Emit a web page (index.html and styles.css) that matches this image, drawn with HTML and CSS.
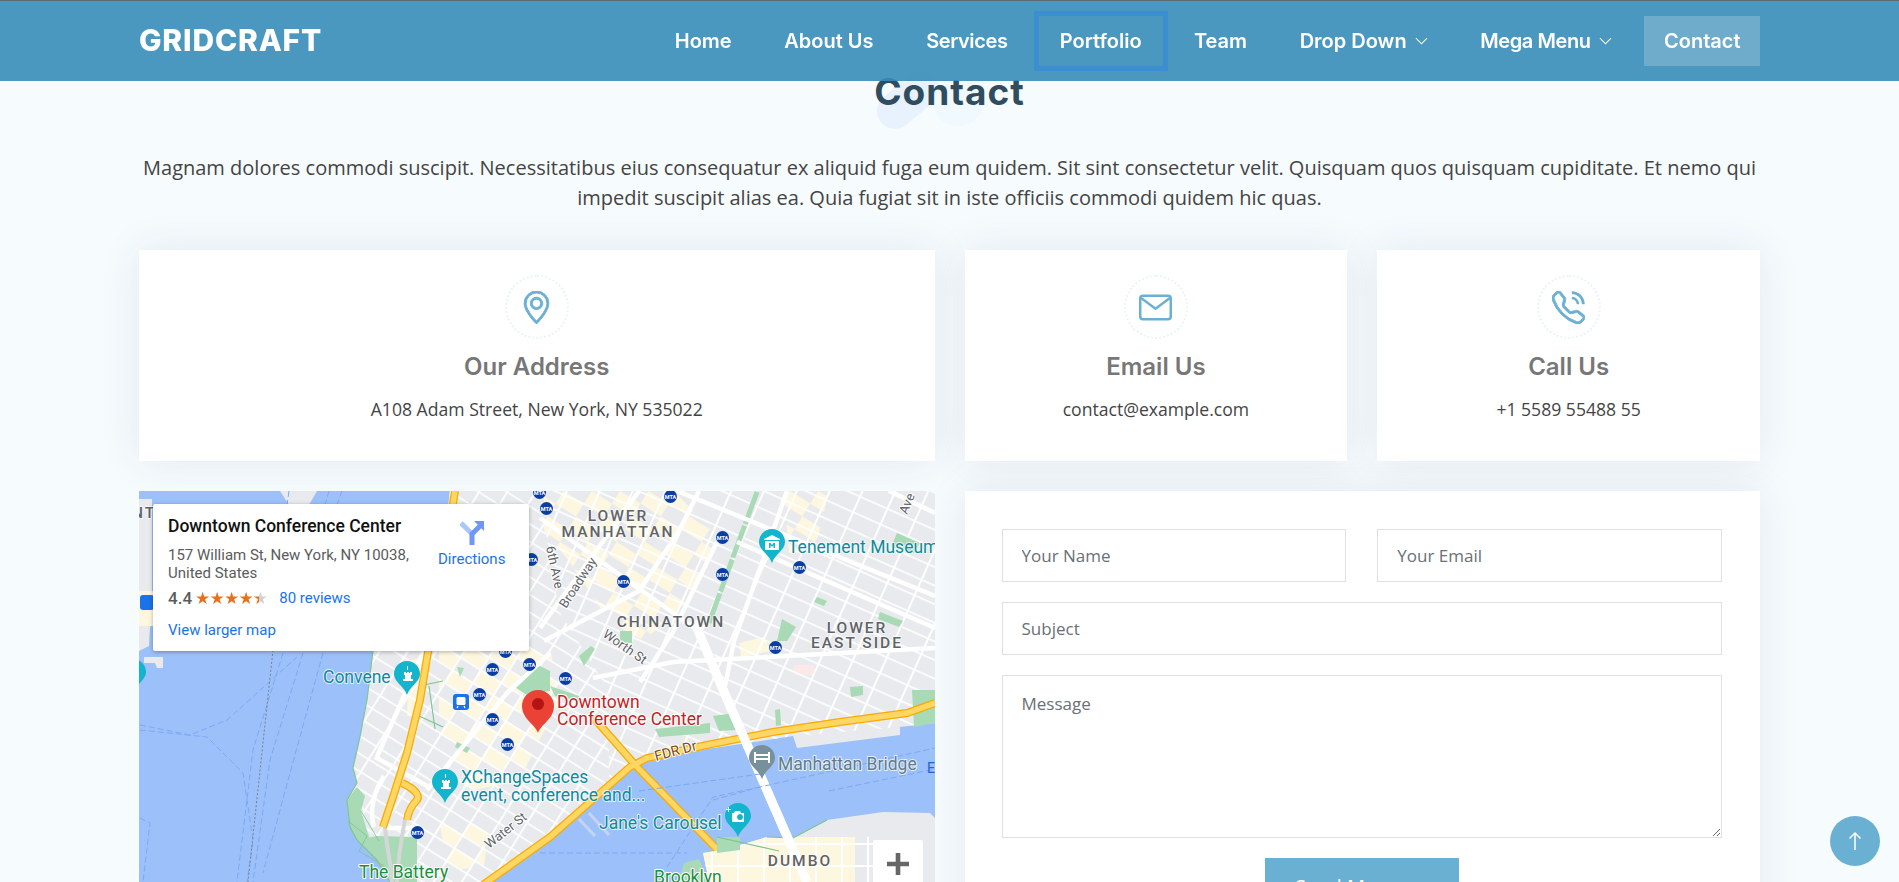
FILE: index.html
```html
<!DOCTYPE html>
<html lang="en">
<head>
<meta charset="utf-8">
<title>Contact - GridCraft</title>
<link rel="stylesheet" href="styles.css">
</head>
<body>
<header class="header">
  <div class="header-inner">
    <a class="logo" href="#">GRIDCRAFT</a>
    <nav class="nav">
      <a class="nav-link" href="#">Home</a>
      <a class="nav-link" href="#">About Us</a>
      <a class="nav-link nav-tight" href="#">Services</a>
      <a class="nav-link is-focused" href="#">Portfolio</a>
      <a class="nav-link" href="#">Team</a>
      <a class="nav-link" href="#">Drop Down<svg class="chev" viewBox="0 0 14 8"><path d="M1 1l6 6 6-6"/></svg></a>
      <a class="nav-link nav-tight nav-last" href="#">Mega Menu<svg class="chev" viewBox="0 0 14 8"><path d="M1 1l6 6 6-6"/></svg></a>
      <a class="nav-link is-active" href="#">Contact</a>
    </nav>
  </div>
</header>

<main class="page">
  <div class="section-title">
    <h2 class="title">Contact</h2>
    <p class="lead">Magnam dolores commodi suscipit. Necessitatibus eius consequatur ex aliquid fuga eum quidem. Sit sint consectetur velit. Quisquam quos quisquam cupiditate. Et nemo qui impedit suscipit alias ea. Quia fugiat sit in iste officiis commodi quidem hic quas.</p>
  </div>

  <div class="grid">
    <div class="card info-box wide">
      <span class="icon-ring"><svg class="bi" viewBox="0 0 16 16"><path d="M12.166 8.94c-.524 1.062-1.234 2.12-1.96 3.07A31.493 31.493 0 0 1 8 14.58a31.481 31.481 0 0 1-2.206-2.57c-.726-.95-1.436-2.008-1.96-3.07C3.304 7.867 3 6.862 3 6a5 5 0 0 1 10 0c0 .862-.305 1.867-.834 2.94zM8 16s6-5.686 6-10A6 6 0 0 0 2 6c0 4.314 6 10 6 10z"/><path d="M8 8a2 2 0 1 1 0-4 2 2 0 0 1 0 4zm0 1a3 3 0 1 0 0-6 3 3 0 0 0 0 6z"/></svg></span>
      <h3 class="box-title">Our Address</h3>
      <p class="box-text">A108 Adam Street, New York, NY 535022</p>
    </div>
    <div class="card info-box">
      <span class="icon-ring"><svg class="bi-line" viewBox="0 0 16 16"><rect x=".6" y="2.300" width="14.800" height="11.400" rx="1.300"/><path d="M1 3.400L8 8.600l7-5.200"/></svg></span>
      <h3 class="box-title">Email Us</h3>
      <p class="box-text">contact@example.com</p>
    </div>
    <div class="card info-box">
      <span class="icon-ring"><svg class="bi" viewBox="0 0 16 16"><path d="M3.654 1.328a.678.678 0 0 0-1.015-.063L1.605 2.3c-.483.484-.661 1.169-.45 1.77a17.568 17.568 0 0 0 4.168 6.608 17.569 17.569 0 0 0 6.608 4.168c.601.211 1.286.033 1.77-.45l1.034-1.034a.678.678 0 0 0-.063-1.015l-2.307-1.794a.678.678 0 0 0-.58-.122l-2.19.547a1.745 1.745 0 0 1-1.657-.459L5.482 8.062a1.745 1.745 0 0 1-.46-1.657l.548-2.19a.678.678 0 0 0-.122-.58L3.654 1.328zM1.884.511a1.745 1.745 0 0 1 2.612.163L6.29 2.98c.329.423.445.974.315 1.494l-.547 2.19a.678.678 0 0 0 .178.643l2.457 2.457a.678.678 0 0 0 .644.178l2.189-.547a1.745 1.745 0 0 1 1.494.315l2.306 1.794c.829.645.905 1.87.163 2.611l-1.034 1.034c-.74.74-1.846 1.065-2.877.702a18.634 18.634 0 0 1-7.01-4.42 18.634 18.634 0 0 1-4.42-7.009c-.362-1.03-.037-2.137.703-2.877L1.885.511z"/><path class="bi-arc" d="M9.600.8a5.600 5.600 0 0 1 5.600 5.600M9.600 3.400a3 3 0 0 1 3 3"/></svg></span>
      <h3 class="box-title">Call Us</h3>
      <p class="box-text">+1 5589 55488 55</p>
    </div>

    <div class="map wide">
      <svg class="map-svg" viewBox="0 0 796 420" preserveAspectRatio="xMinYMin slice">
        <defs>
          <pattern id="gridE" width="30" height="17" patternUnits="userSpaceOnUse" patternTransform="rotate(24)"><rect width="2" height="17" fill="#fff"/><rect width="30" height="1.6" fill="#fff"/></pattern>
          <pattern id="gridW" width="24" height="15" patternUnits="userSpaceOnUse" patternTransform="rotate(32)"><rect width="1.8" height="15" fill="#fff"/><rect width="24" height="1.6" fill="#fff"/></pattern>
          <pattern id="gridB" width="26" height="22" patternUnits="userSpaceOnUse"><rect width="2" height="22" fill="#fff"/><rect width="26" height="2" fill="#fff"/></pattern>
          <pattern id="yellow" width="48" height="30" patternUnits="userSpaceOnUse" patternTransform="rotate(32)"><rect width="24" height="15" fill="#fef7e0"/><rect x="24" y="15" width="24" height="15" fill="#fef7e0"/></pattern>
          <symbol id="mta" viewBox="0 0 13 13"><circle cx="6.5" cy="6.5" r="6.5" fill="#0b3ea5"/><text class="mta-text" x="6.5" y="8.6">MTA</text></symbol>
          <symbol id="pin" viewBox="0 0 26 34"><path d="M13 0C5.8 0 0 5.8 0 13c0 8 10 12 13 21 3-9 13-13 13-21C26 5.8 20.2 0 13 0z"/></symbol>
        </defs>

        <rect class="water" width="796" height="420"/>

        <!-- Manhattan -->
        <polygon class="land" points="311,0 300,80 234,160 228,209 221,246 214,277 218,292 208,309 211,336 218,349 238,369 251,391 251,420 320,420 348,391 401,354 491,280 508,271 568,258 654,245 658,257 761,244 761,236 796,232 796,0"/>
        <polygon class="land" points="0,8 13,8 13,100 10,155 0,160"/>
        <polygon class="yellow-solid" points="0,100 14,100 14,135 0,135"/>
        <polygon class="land" points="141,0 178,0 170,14 150,14"/>
        <polygon class="land" points="5,166 24,166 24,177 18,177 16,172 5,172"/>

        <!-- Yellow neighbourhood fills -->
        <polygon class="yellow-fill" points="405,0 535,0 578,45 548,110 505,150 470,130 430,70 405,40"/>
        <polygon class="yellow-fill" points="300,150 410,150 420,210 380,290 330,300 300,240"/>
        <polygon class="yellow-fill" points="300,330 350,335 345,375 310,380"/>
        <polygon class="yellow-fill" points="645,0 690,0 675,62 650,62"/>
        <polygon class="yellow-solid" points="600,152 625,146 632,160 602,166"/>
        <polygon class="yellow-solid" points="270,170 288,165 280,225 268,225"/>
        <rect class="pink" x="655" y="174" width="20" height="10"/>

        <!-- Street grids -->
        <polygon fill="url(#gridW)" points="311,0 300,80 234,160 228,209 221,246 214,277 218,292 208,309 211,336 218,349 238,369 251,391 348,391 401,354 470,295 470,200 420,120 400,0"/>
        <polygon fill="url(#gridE)" points="400,0 420,120 470,200 470,295 491,280 508,271 568,258 654,245 761,236 796,232 796,0"/>

        <!-- Parks -->
        <g class="park">
          <polygon points="481,140 493,140 493,152 481,152"/>
          <polygon points="643,128 657,136 648,150 638,150"/>
          <polygon points="741,121 764,130 760,136 739,128"/>
          <polygon points="758,42 781,52 775,62 752,56"/>
          <polygon points="678,106 688,110 685,115 675,111"/>
          <polygon points="574,225 596,222 598,239 580,240"/>
          <polygon points="516,238 571,232 571,242 520,246"/>
          <polygon points="773,199 796,199 796,232 775,236"/>
          <polygon points="711,196 724,195 724,204 712,206"/>
          <polygon points="636,219 641,218 642,234 637,235"/>
          <polygon points="318,251 331,257 328,262 316,256"/>
          <polygon points="374,195 395,172 411,180 411,200 388,204"/>
          <polygon points="318,176 325,177 321,186"/>
          <polygon points="208,309 218,296 226,305 222,320 231,349 218,349 211,336"/>
          <polygon points="218,349 238,345 278,346 278,391 251,391 238,369"/>
          <polygon points="411,195 440,205 446,212 416,205"/>
          <polygon points="440,165 452,155 456,158 445,175"/>
        </g>
        <path class="park-line" d="M618 1L600 50L570 132"/>
        <path class="shore" d="M234 160L228 209L221 246L214 277L218 292L208 309L211 336L218 349L238 369L251 391"/>
        <path class="shore" d="M280 195L304 190M280 225L304 236M290 195L296 238"/>
        <path class="road-thin" d="M209 330L228 345L220 360L245 375M222 320L240 350"/>

        <!-- Major roads -->
        <g class="road">
          <path d="M598 51L796 137"/>
          <path d="M648 0L620 80L595 150L586 195"/>
          <path d="M401 137L481 27L500 0"/>
          <path d="M578 51L534 141L501 191"/>
          <path d="M401 27L561 141"/>
          <path d="M454 187L534 171L796 157"/>
          <path d="M288 299L368 202L411 162"/>
          <path d="M238 266L284 162"/>
          <path d="M236 266L290 296"/>
          <path d="M235 336C230 320 235 300 245 285"/>
          <path d="M244 337L278 337"/>
          <path d="M405 150L500 100L540 40L560 0"/>
          <path d="M750 0L796 22"/>
          <path d="M538 0L796 105"/>
        </g>
        <path class="road-major" d="M555 130L582 194L668 391"/>

        <!-- Tunnel + highways -->
        <path class="tunnel" d="M246 336C248 360 253 375 253 395M266 329C262 350 258 375 258 395"/>
        <g class="hwy-edge">
          <path d="M316 0L305 70L289 161L281 209L268 262L254 306L244 336"/>
          <path d="M263 292C272 296 282 303 278 309C272 315 269 322 268 329"/>
          <path d="M796 212L768 222L701 231L634 241L568 254L508 267L491 276L411 346L348 391L340 397"/>
          <path d="M454 226L498 276L608 389L620 400"/>
        </g>
        <g class="hwy">
          <path d="M316 0L305 70L289 161L281 209L268 262L254 306L244 336"/>
          <path d="M263 292C272 296 282 303 278 309C272 315 269 322 268 329"/>
          <path d="M796 212L768 222L701 231L634 241L568 254L508 267L491 276L411 346L348 391L340 397"/>
          <path d="M454 226L498 276L608 389L620 400"/>
        </g>

        <!-- Brooklyn -->
        <polygon class="land" points="796,327 791,322 744,321 688,329 654,347 628,346 584,359 564,362 571,395 796,395"/>
        <polygon class="yellow-solid" points="584,359 628,346 716,346 716,395 571,395 564,362"/>
        <polygon fill="url(#gridB)" points="584,359 628,346 734,346 734,395 571,395 564,362"/>
        <polygon class="park" points="578,346 601,346 601,359 578,362"/>
        <path class="shore" d="M578 346L640 360M628 346L654 347L688 329"/>
        <polygon class="park" points="545,372 560,368 572,395 538,395"/>
        <path class="road-major" d="M582 194L668 391"/>

        <!-- Water channels -->
        <g class="channel">
          <path d="M1 239L68 246L104 282L114 349L108 391"/>
          <path d="M1 234L51 244L88 229L158 166"/>
          <path d="M144 162L114 259L98 391"/>
          <path d="M164 162L131 269L114 391"/>
          <path d="M184 162L151 282L124 382"/>
          <path d="M1 327L11 332L4 391"/>
          <path d="M203 0L198 14M190 0L186 14M150 0L148 14"/>
          <path d="M574 309L621 296L796 257"/>
          <path d="M500 300L621 283"/>
          <path d="M401 362L548 362"/>
          <path d="M528 376L574 306L621 296"/>
          <path d="M690 300L796 278"/>
        </g>
        <path class="boundary" d="M134 159L109 391"/>
        <path class="pier" d="M440 328L456 345M450 322L470 344"/>

        <!-- Transit badges -->
        <use href="#mta" x="394" y="-5" width="13" height="13"/>
        <use href="#mta" x="401" y="11" width="13" height="13"/>
        <use href="#mta" x="386" y="62" width="13" height="13"/>
        <use href="#mta" x="360" y="154" width="13" height="13"/>
        <use href="#mta" x="347" y="172" width="13" height="13"/>
        <use href="#mta" x="384" y="167" width="13" height="13"/>
        <use href="#mta" x="334" y="197" width="13" height="13"/>
        <use href="#mta" x="347" y="222" width="13" height="13"/>
        <use href="#mta" x="362" y="247" width="13" height="13"/>
        <use href="#mta" x="272" y="335" width="13" height="13"/>
        <use href="#mta" x="525" y="-1" width="13" height="13"/>
        <use href="#mta" x="577" y="40" width="13" height="13"/>
        <use href="#mta" x="577" y="77" width="13" height="13"/>
        <use href="#mta" x="478" y="84" width="13" height="13"/>
        <use href="#mta" x="654" y="70" width="13" height="13"/>
        <use href="#mta" x="630" y="150" width="13" height="13"/>
        <use href="#mta" x="420" y="181" width="13" height="13"/>
        <rect class="subway-bg" x="314" y="203" width="16" height="16" rx="3"/>
        <rect class="subway-fg" x="317.500" y="206" width="9" height="8" rx="1.500"/>
        <path class="subway-legs" d="M319 215l-1 2M325 215l1 2"/>
        <rect class="subway-bg" x="1" y="104" width="14" height="15" rx="3"/>

        <!-- Pins -->
        <use class="pin-teal" href="#pin" width="26" height="34" transform="translate(-19 168)"/>
        <use class="pin-teal" href="#pin" width="26" height="34" transform="translate(255 170)"/>
        <path class="glyph" d="M262 190h12v-2h-2v-4h1v-3h-2v1h-1v-1h-2v1h-1v-1h-2v3h1v4h-2v2zM268 175v4h1v-4z"/>
        <use class="pin-teal" href="#pin" width="26" height="34" transform="translate(293 278)"/>
        <path class="glyph" d="M300 298h12v-2h-2v-4h1v-3h-2v1h-1v-1h-2v1h-1v-1h-2v3h1v4h-2v2zM306 283v4h1v-4z"/>
        <use class="pin-teal" href="#pin" width="26" height="34" transform="translate(620 38)"/>
        <path class="glyph" d="M633 44l8 4v1h-16v-1zM626 50h14v9h-14zM630 52v5h1.500v-3l1.500 2 1.500-2v3h1.500v-5h-1.500l-1.500 2-1.500-2z" fill-rule="evenodd"/>
        <use class="pin-teal" href="#pin" width="26" height="34" transform="translate(586 312)"/>
        <path class="glyph" d="M593 322h2l1-2h5l1 2h3v9h-12zM601 323a3 3 0 1 0 .01 0zM589 316h1v2h2v1h-2v2h-1v-2h-2v-1h2z" fill-rule="evenodd"/>
        <use class="pin-grey" href="#pin" width="26" height="34" transform="translate(610 254)"/>
        <path class="glyph" d="M615 261h2v2h12v-2h2v11h-2v-3h-12v3h-2zM617 265v2h12v-2z" fill-rule="evenodd"/>
        <path class="pin-red" d="M399 242c-3-9-16-14-16-27a16 16 0 0 1 32 0c0 13-13 18-16 27z"/>
        <circle class="pin-red-dot" cx="399" cy="213" r="6"/>

        <!-- Labels -->
        <g class="lb-area">
          <text x="479" y="30">LOWER</text>
          <text x="479" y="46">MANHATTAN</text>
          <text x="532" y="136">CHINATOWN</text>
          <text x="718" y="142">LOWER</text>
          <text x="718" y="157">EAST SIDE</text>
          <text x="661" y="375">DUMBO</text>
          <text x="5" y="27">NT</text>
        </g>
        <g class="lb-street">
          <text transform="translate(407 56) rotate(78)">6th Ave</text>
          <text transform="translate(427 118) rotate(-57)">Broadway</text>
          <text transform="translate(463 145) rotate(35)">Worth St</text>
          <text transform="translate(350 358) rotate(-38)">Water St</text>
          <text transform="translate(768 24) rotate(-68)">Ave</text>
        </g>
        <text class="lb-road" transform="translate(517 270) rotate(-15)">FDR Dr</text>
        <g class="lb-teal">
          <text x="184" y="192">Convene</text>
          <text x="322" y="292">XChangeSpaces</text>
          <text x="322" y="310">event, conference and...</text>
          <text x="649" y="62">Tenement Museum</text>
          <text x="460" y="338">Jane's Carousel</text>
        </g>
        <text class="lb-poi" x="639" y="279">Manhattan Bridge</text>
        <g class="lb-red">
          <text x="418" y="217">Downtown</text>
          <text x="418" y="234">Conference Center</text>
        </g>
        <g class="lb-green">
          <text x="220" y="387">The Battery</text>
          <text x="515" y="392">Brooklyn</text>
        </g>
        <text class="lb-river" x="788" y="282">E</text>
      </svg>

      <div class="place-card">
        <div class="place-main">
          <div class="place-name">Downtown Conference Center</div>
          <div class="place-addr">157 William St, New York, NY 10038, United States</div>
          <div class="place-rating"><span class="rating-num">4.4</span><span class="stars">★★★★★</span><a class="place-link reviews" href="#">80 reviews</a></div>
          <a class="place-link larger" href="#">View larger map</a>
        </div>
        <a class="directions" href="#">
          <svg class="dir-icon" viewBox="0 0 24 24"><path class="dir-light" d="M1 2L12 13"/><path class="dir-dark" d="M12 24V13L21 4"/><polygon class="dir-head" points="14,0 24,0 24,10"/></svg>
          <span>Directions</span>
        </a>
      </div>

      <div class="zoom-ctl"><svg class="zoom-plus" viewBox="0 0 22 22"><path d="M8.700 0h4.600v8.700H22v4.600h-8.700V22H8.700v-8.700H0V8.700h8.700z"/></svg></div>
    </div>

    <form class="card contact-form wide">
      <div class="form-row">
        <input class="field" type="text" placeholder="Your Name">
        <input class="field" type="email" placeholder="Your Email">
      </div>
      <input class="field" type="text" placeholder="Subject">
      <textarea class="field field-area" placeholder="Message"></textarea>
      <div class="form-submit"><button class="send" type="button">Send Message</button></div>
    </form>
  </div>
</main>

<a class="scroll-top" href="#"><svg viewBox="0 0 16 24"><path d="M8 21V4M2.500 9.500L8 4l5.500 5.500"/></svg></a>
</body>
</html>
```

FILE: styles.css
```css
* { box-sizing: border-box; }
html, body { margin: 0; height: 882px; overflow: hidden; }
body {
  background: #f6fbfe;
  color: #444;
  font-family: "Open Sans", sans-serif;
}
a { text-decoration: none; }

.header {
  position: fixed;
  top: 0; left: 0; right: 0;
  height: 81px;
  z-index: 10;
  background: rgba(55, 141, 184, .9);
  border-top: 1px solid #5e6b75;
}
.header-inner {
  max-width: 1621px;
  margin: 0 auto;
  height: 80px;
  display: flex;
  align-items: center;
  justify-content: space-between;
}
.logo {
  font-family: Inter, sans-serif;
  font-weight: 800;
  font-size: 30px;
  letter-spacing: .8px;
  color: #fff;
  margin-top: -2px;
}
.nav { display: flex; align-items: center; margin-top: -1px; }
.nav-link {
  display: flex;
  align-items: center;
  height: 50px;
  padding: 0 26.300px;
  font-family: Inter, sans-serif;
  font-weight: 600;
  font-size: 20px;
  color: #fff;
  white-space: pre;
}
.nav-tight { letter-spacing: -.4px; }
.nav-last { margin-right: 6.500px; }
.nav-link.is-focused {
  height: 60px;
  padding: 0 26px;
  outline: 5px solid #3b8fd0;
  outline-offset: -5px;
}
.nav-link.is-active {
  padding: 0 19.500px;
  background: rgba(255, 255, 255, .2);
}
.chev { width: 13px; height: 8px; margin-left: 8px; fill: none; stroke: #fff; stroke-width: 1.200; }

.page { max-width: 1621px; margin: 0 auto; padding-top: 68px; }

.section-title { text-align: center; position: relative; }
.title {
  position: relative;
  margin: 0 0 37px;
  font-family: Inter, sans-serif;
  font-weight: 700;
  font-size: 37px;
  letter-spacing: 1px;
  line-height: 48px;
  color: #2f4d5f;
  z-index: 1;
}
.section-title::before {
  content: "";
  position: absolute;
  left: 734px;
  top: 14px;
  width: 70px;
  height: 36px;
  border-radius: 18px;
  background: #e8f2fe;
  transform: rotate(-40deg);
}
.section-title::after {
  content: "";
  position: absolute;
  left: 794px;
  top: 12px;
  width: 50px;
  height: 46px;
  border-radius: 50%;
  background: #f0f9fd;
}
.lead {
  position: relative;
  margin: 0 0 37px;
  font-size: 20px;
  line-height: 30px;
  color: #444;
}

.grid {
  display: grid;
  grid-template-columns: repeat(4, 1fr);
  gap: 30px;
}
.wide { grid-column: span 2; }
.card {
  background: #fff;
  box-shadow: 0 0 40px rgba(40, 60, 80, .09);
}
.info-box {
  height: 211px;
  padding-top: 25px;
  display: flex;
  flex-direction: column;
  align-items: center;
}
.icon-ring {
  width: 64px;
  height: 64px;
  display: flex;
  align-items: center;
  justify-content: center;
  border: 2px dotted #e9f4f9;
  border-radius: 50%;
}
.bi { width: 33px; height: 33px; fill: #6bb0d3; stroke: #6bb0d3; stroke-width: .45; }
.bi-line { width: 33px; height: 33px; fill: none; stroke: #6bb0d3; stroke-width: 1.200; }
.bi-arc { fill: none; stroke: #6bb0d3; stroke-width: 1.300; }
.box-title {
  margin: 13px 0 0;
  font-family: Inter, sans-serif;
  font-weight: 600;
  font-size: 24px;
  line-height: 30px;
  color: #777;
}
.box-text {
  margin: 14px 0 0;
  font-size: 17.600px;
  line-height: 27px;
  color: #444;
}

.map {
  position: relative;
  height: 420px;
  overflow: hidden;
  background: #9cc0f9;
}
.map-svg { display: block; width: 100%; height: 420px; font-family: Roboto, sans-serif; }

.water { fill: #9cc0f9; }
.land { fill: #e8eaed; }
.yellow-fill { fill: url(#yellow); }
.yellow-solid { fill: #fef7e0; }
.pink { fill: #fce8e6; }
.park, .park polygon { fill: #a8dab5; }
.park-line { fill: none; stroke: #a8dab5; stroke-width: 5; stroke-dasharray: 34 2; }
.shore { fill: none; stroke: #7cc48d; stroke-width: 1.100; }
.road-thin { fill: none; stroke: #7cc48d; stroke-width: .8; }
.road path { fill: none; stroke: #fff; stroke-width: 4.500; }
.road-major { fill: none; stroke: #fff; stroke-width: 9; }
.tunnel { fill: none; stroke: #d4d6d8; stroke-width: 4; }
.hwy-edge path { fill: none; stroke: #f9ab00; stroke-width: 8; }
.hwy path { fill: none; stroke: #fdd663; stroke-width: 5.500; }
.channel path { fill: none; stroke: #7ca8f4; stroke-width: 1; stroke-dasharray: 6 3; }
.boundary { fill: none; stroke: #75808f; stroke-width: 1; stroke-dasharray: 2 2; }
.pier { fill: none; stroke: #c7d4ee; stroke-width: 3; }
.mta-text { font-size: 5.500px; font-weight: 700; fill: #fff; text-anchor: middle; font-family: Roboto, sans-serif; }
.pin-teal { fill: #12b5cb; }
.pin-grey { fill: #78909c; }
.glyph { fill: #fff; }
.pin-red { fill: #ea4335; }
.pin-red-dot { fill: #b31412; }
.subway-bg { fill: #1a73e8; }
.subway-fg { fill: #fff; }
.subway-legs { fill: none; stroke: #fff; stroke-width: 1.200; }

.map-svg text { paint-order: stroke; stroke-linejoin: round; }
.lb-area text { text-anchor: middle; font-size: 15.500px; font-weight: 500; letter-spacing: 2px; fill: #5f6368; stroke: #fff; stroke-width: 2px; stroke-opacity: .6; }
.lb-street text { font-size: 13px; fill: #5f6368; stroke: #fff; stroke-width: 2px; }
.lb-road { font-size: 14px; fill: #7a4d10; stroke: #fff; stroke-width: 2px; }
.lb-teal text { font-size: 17.500px; fill: #0e8a9c; stroke: #fff; stroke-width: 2px; stroke-opacity: .75; }
.lb-poi { font-size: 17.500px; fill: #5f7b8b; stroke: #fff; stroke-width: 2px; stroke-opacity: .75; }
.lb-red text { font-size: 17.500px; fill: #c5221f; stroke: #fff; stroke-width: 2px; }
.lb-green text { font-size: 17.500px; fill: #1e8e3e; stroke: #fff; stroke-width: 2px; }
.lb-river { font-size: 14px; fill: #1a66d0; }

.place-card {
  position: absolute;
  left: 14px;
  top: 13px;
  width: 376px;
  height: 147px;
  padding: 12px 0 0 15px;
  display: flex;
  background: #fff;
  border-radius: 2px;
  box-shadow: 0 1px 4px rgba(0, 0, 0, .3);
  font-family: Roboto, sans-serif;
}
.place-main { width: 246px; }
.place-name { font-size: 17.500px; font-weight: 500; color: #111; line-height: 20px; white-space: nowrap; }
.place-addr { margin-top: 10px; font-size: 15px; line-height: 18px; color: #5b5b5b; }
.place-rating { display: flex; align-items: center; margin-top: 4px; height: 24px; }
.rating-num { font-size: 17px; color: #5b5b5b; font-weight: 500; }
.stars {
  margin-left: 3px;
  font-family: "DejaVu Sans", sans-serif;
  font-size: 17px;
  line-height: 1;
  letter-spacing: -.8px;
  background: linear-gradient(90deg, #e7711b 89%, #d0d0d0 89%);
  -webkit-background-clip: text;
  background-clip: text;
  color: transparent;
}
.place-link { color: #1a73e8; font-size: 15px; }
.reviews { margin-left: 12px; }
.larger { display: block; margin-top: 10px; line-height: 20px; }
.directions {
  display: flex;
  flex-direction: column;
  align-items: center;
  margin-left: 24px;
  margin-top: 5px;
  color: #1a73e8;
  font-size: 15px;
  gap: 5px;
  height: 50px;
}
.dir-icon { width: 24px; height: 24px; display: block; }
.dir-light { fill: none; stroke: #a8c7fa; stroke-width: 5; }
.dir-dark { fill: none; stroke: #6f97f7; stroke-width: 5; }
.dir-head { fill: #6f97f7; }

.zoom-ctl {
  position: absolute;
  left: 734px;
  top: 349px;
  width: 50px;
  height: 60px;
  display: flex;
  justify-content: center;
  padding-top: 13px;
  background: #fff;
  border-radius: 2px;
}
.zoom-plus { width: 22px; height: 22px; fill: #666; }

.contact-form {
  padding: 38px 38px 38px 37px;
  display: flex;
  flex-direction: column;
  gap: 20px;
}
.form-row { display: grid; grid-template-columns: 1fr 1fr; gap: 31px; }
.field {
  display: block;
  width: 100%;
  height: 53px;
  padding: 0 19px;
  border: 1px solid #dfdfe5;
  border-radius: 0;
  background: #fff;
  font-family: "Open Sans", sans-serif;
  font-size: 17px;
  color: #444;
}
.field::placeholder { color: #6a7076; opacity: 1; }
.field-area { height: 163px; padding-top: 16px; line-height: 24px; }
.form-submit { display: flex; justify-content: center; }
.send {
  width: 194px;
  height: 56px;
  border: 0;
  background: #6ab0d3;
  color: #fff;
  font-family: "Open Sans", sans-serif;
  font-size: 20px;
}

.scroll-top {
  position: fixed;
  left: 1830px;
  top: 816px;
  width: 50px;
  height: 50px;
  display: flex;
  align-items: center;
  justify-content: center;
  border-radius: 50%;
  background: #6ab0d3;
}
.scroll-top svg { width: 16px; height: 24px; fill: none; stroke: #fff; stroke-width: 1.500; }
```
